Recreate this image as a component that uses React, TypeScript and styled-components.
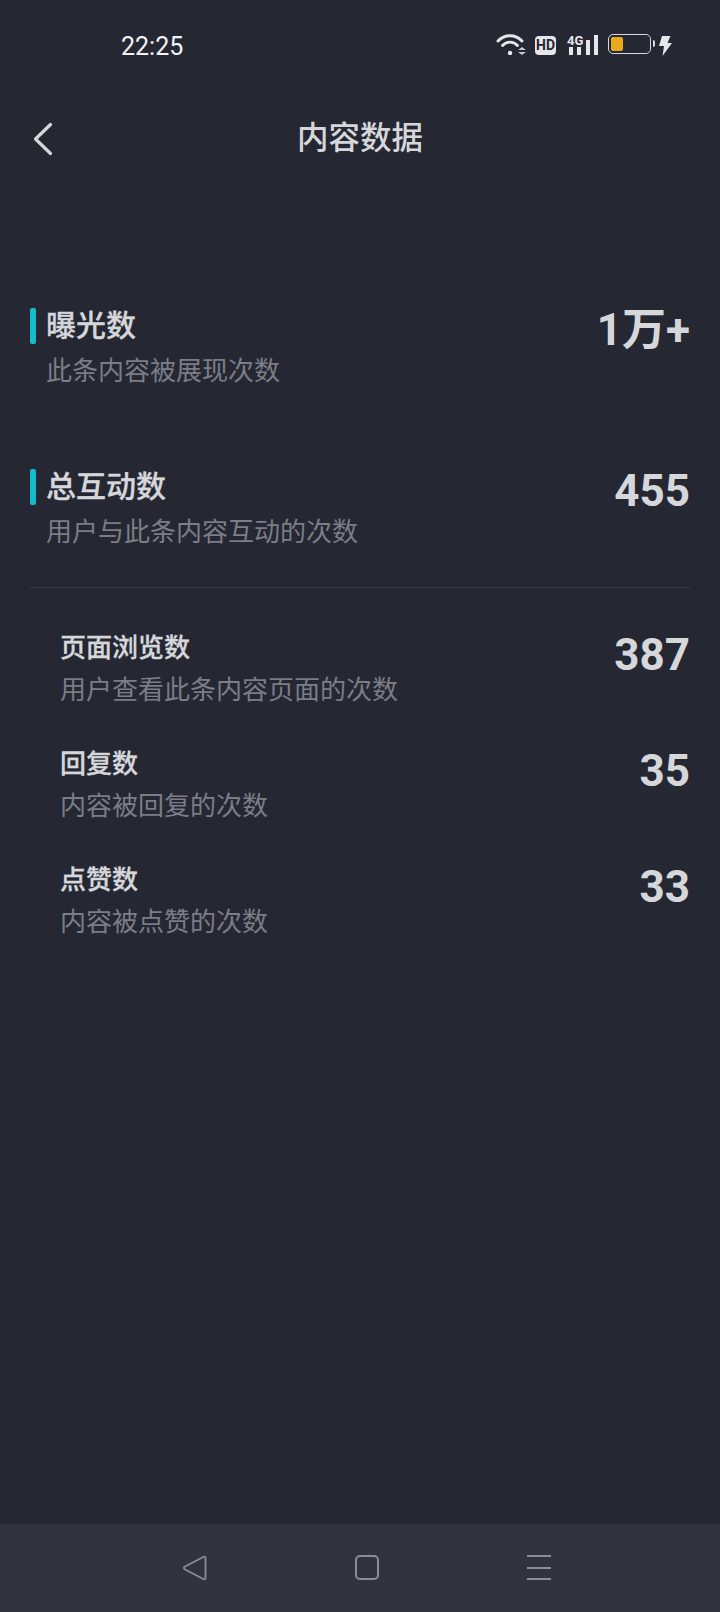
import styled, { createGlobalStyle } from "styled-components";

const FONT = `Roboto, "Noto Sans CJK SC", sans-serif`;

const stats = [
  { title: "曝光数", desc: "此条内容被展现次数", value: "1万+" },
  { title: "总互动数", desc: "用户与此条内容互动的次数", value: "455" },
];

const details = [
  { title: "页面浏览数", desc: "用户查看此条内容页面的次数", value: "387" },
  { title: "回复数", desc: "内容被回复的次数", value: "35" },
  { title: "点赞数", desc: "内容被点赞的次数", value: "33" },
];

export default function App() {
  return (
    <>
      <GlobalStyle />
      <Page>
        <StatusBar>
          <Time>22:25</Time>
          <StatusIcons>
            <svg width="30" height="22" viewBox="0 0 30 22" fill="none">
              <path d="M2 8 C8.5 1 19.5 1 26 8" stroke="#e6e7ea" strokeWidth="3" strokeLinecap="round" />
              <path d="M6.5 12.5 C10.5 8 17.5 8 21.5 12.5" stroke="#e6e7ea" strokeWidth="2.8" strokeLinecap="round" />
              <circle cx="14" cy="20" r="2.2" fill="#e6e7ea" />
              <path d="M22 17 L30 17 L26 14 Z M22 19 L30 19 L26 22 Z" fill="#c4c6cb" />
            </svg>
            <HdBadge>HD</HdBadge>
            <Signal>
              <SignalLabel>4G</SignalLabel>
              <svg width="32" height="20" viewBox="0 0 32 20" fill="#e6e7ea">
                <rect x="2" y="12" width="4" height="8" />
                <rect x="10" y="12" width="4" height="8" />
                <rect x="19" y="5" width="4" height="15" />
                <rect x="27" y="0" width="4" height="20" />
              </svg>
            </Signal>
            <Battery>
              <BatteryLevel />
            </Battery>
            <BoltIcon width="13" height="20" viewBox="0 0 13 20" fill="#e6e7ea">
              <path d="M3 0 L11.5 0 L8.5 7 L13 7 L3.5 20 L5 10 L0 10 Z" />
            </BoltIcon>
          </StatusIcons>
        </StatusBar>

        <Header>
          <BackButton>
            <svg width="22" height="34" viewBox="0 0 22 34" fill="none">
              <path d="M18.5 2.5 L3.5 17 L18.5 31.5" stroke="#d6d7db" strokeWidth="3.2" strokeLinecap="round" strokeLinejoin="round" />
            </svg>
          </BackButton>
          <HeaderTitle>内容数据</HeaderTitle>
        </Header>

        <Summary>
          {stats.map((s) => (
            <SummaryRow key={s.title}>
              <Accent />
              <RowText>
                <SummaryTitle>{s.title}</SummaryTitle>
                <Desc $gap={9}>{s.desc}</Desc>
              </RowText>
              <Value $top={0}>{s.value}</Value>
            </SummaryRow>
          ))}
        </Summary>

        <Divider />

        <Details>
          {details.map((d) => (
            <DetailRow key={d.title}>
              <RowText>
                <DetailTitle>{d.title}</DetailTitle>
                <Desc $gap={6}>{d.desc}</Desc>
              </RowText>
              <Value $top={3}>{d.value}</Value>
            </DetailRow>
          ))}
        </Details>

        <NavBar>
          <svg width="26" height="26" viewBox="0 0 26 26" fill="none">
            <path d="M23.5 2.8 C23.5 1.8 22.6 1.3 21.8 1.7 L2.6 11.8 C1.6 12.4 1.6 13.6 2.6 14.2 L21.8 24.3 C22.6 24.7 23.5 24.2 23.5 23.2 Z" stroke="#8b8d96" strokeWidth="1.8" strokeLinejoin="round" />
          </svg>
          <HomeSquare />
          <MenuLines>
            <span />
            <span />
            <span />
          </MenuLines>
        </NavBar>
      </Page>
    </>
  );
}

const GlobalStyle = createGlobalStyle`
  html, body {
    margin: 0;
    padding: 0;
    background: #252833;
  }
`;

const Page = styled.div`
  width: 720px;
  height: 1612px;
  display: flex;
  flex-direction: column;
  background: #252833;
  font-family: ${FONT};
  overflow: hidden;
`;

const StatusBar = styled.div`
  height: 92px;
  padding: 32px 48px 0 121px;
  box-sizing: border-box;
  display: flex;
  justify-content: space-between;
  align-items: flex-start;
`;

const Time = styled.div`
  font-size: 25px;
  line-height: 29px;
  font-weight: 400;
  color: #f2f3f4;
`;

const StatusIcons = styled.div`
  display: flex;
  align-items: flex-end;
  height: 23px;
  gap: 9px;
`;

const BoltIcon = styled.svg`
  margin-left: -1px;
  margin-bottom: -1px;
`;

const HdBadge = styled.div`
  width: 21px;
  height: 19px;
  border-radius: 4px;
  background: #e6e7ea;
  color: #252833;
  font-size: 14px;
  line-height: 19px;
  font-weight: 700;
  text-align: center;
`;

const Signal = styled.div`
  position: relative;
  width: 32px;
  height: 20px;
  margin-left: 2px;
`;

const SignalLabel = styled.span`
  position: absolute;
  left: 0;
  top: -1px;
  font-size: 13px;
  line-height: 13px;
  font-weight: 700;
  color: #e6e7ea;
  background: #252833;
`;

const Battery = styled.div`
  position: relative;
  width: 43px;
  height: 20px;
  margin-bottom: 1px;
  padding: 2px;
  box-sizing: border-box;
  border: 1.5px solid #d8d9dd;
  border-radius: 5px;
  display: flex;

  &::after {
    content: "";
    position: absolute;
    right: -5px;
    top: 5px;
    width: 2px;
    height: 7px;
    background: #d8d9dd;
    border-radius: 0 2px 2px 0;
  }
`;

const BatteryLevel = styled.div`
  width: 12px;
  background: #e8a91c;
  border-radius: 2px;
`;

const Header = styled.div`
  position: relative;
  height: 92px;
  padding-top: 2px;
  box-sizing: border-box;
  display: flex;
  align-items: center;
  justify-content: center;
`;

const BackButton = styled.div`
  position: absolute;
  left: 32px;
  top: 30px;
  line-height: 0;
`;

const HeaderTitle = styled.div`
  font-size: 31.5px;
  line-height: 48px;
  font-weight: 500;
  color: #d6d7db;
`;

const Summary = styled.div`
  margin-top: 124px;
  padding: 0 30px;
  display: flex;
  flex-direction: column;
  gap: 80px;
`;

const SummaryRow = styled.div`
  position: relative;
  height: 81px;
  padding-left: 16px;
  display: flex;
  justify-content: space-between;
`;

const Accent = styled.div`
  position: absolute;
  left: 0;
  top: 0;
  width: 6px;
  height: 36px;
  border-radius: 2px;
  background: #14bbcb;
`;

const RowText = styled.div`
  display: flex;
  flex-direction: column;
`;

const SummaryTitle = styled.div`
  font-size: 30px;
  line-height: 36px;
  font-weight: 500;
  -webkit-text-stroke: 0.3px #d6d7db;
  color: #d6d7db;
`;

const Desc = styled.div<{ $gap: number }>`
  margin-top: ${(p) => p.$gap}px;
  font-size: 26px;
  line-height: 36px;
  color: #7b7d87;
`;

const Value = styled.div<{ $top: number }>`
  font-size: 44px;
  line-height: 44px;
  font-weight: 700;
  color: #d6d7db;
  margin-top: ${(p) => p.$top}px;
`;

const Divider = styled.div`
  margin: 37px 30px 0;
  height: 1px;
  background: #383b46;
`;

const Details = styled.div`
  margin-top: 42px;
  padding: 0 30px 0 60px;
  display: flex;
  flex-direction: column;
  gap: 36px;
`;

const DetailRow = styled.div`
  height: 80px;
  display: flex;
  justify-content: space-between;
`;

const DetailTitle = styled.div`
  font-size: 26px;
  line-height: 36px;
  font-weight: 500;
  -webkit-text-stroke: 0.3px #d6d7db;
  color: #d6d7db;
`;

const NavBar = styled.div`
  margin-top: auto;
  height: 88px;
  padding: 31px 0 0 182px;
  box-sizing: border-box;
  background: #31333f;
  display: flex;
  align-items: flex-start;
  gap: 147px;
`;

const HomeSquare = styled.div`
  width: 24px;
  height: 25px;
  box-sizing: border-box;
  border: 2px solid #8b8d96;
  border-radius: 5px;
`;

const MenuLines = styled.div`
  width: 24px;
  height: 25px;
  margin-left: 1px;
  display: flex;
  flex-direction: column;
  justify-content: space-between;

  span {
    display: block;
    height: 2px;
    background: #8b8d96;
  }
`;
